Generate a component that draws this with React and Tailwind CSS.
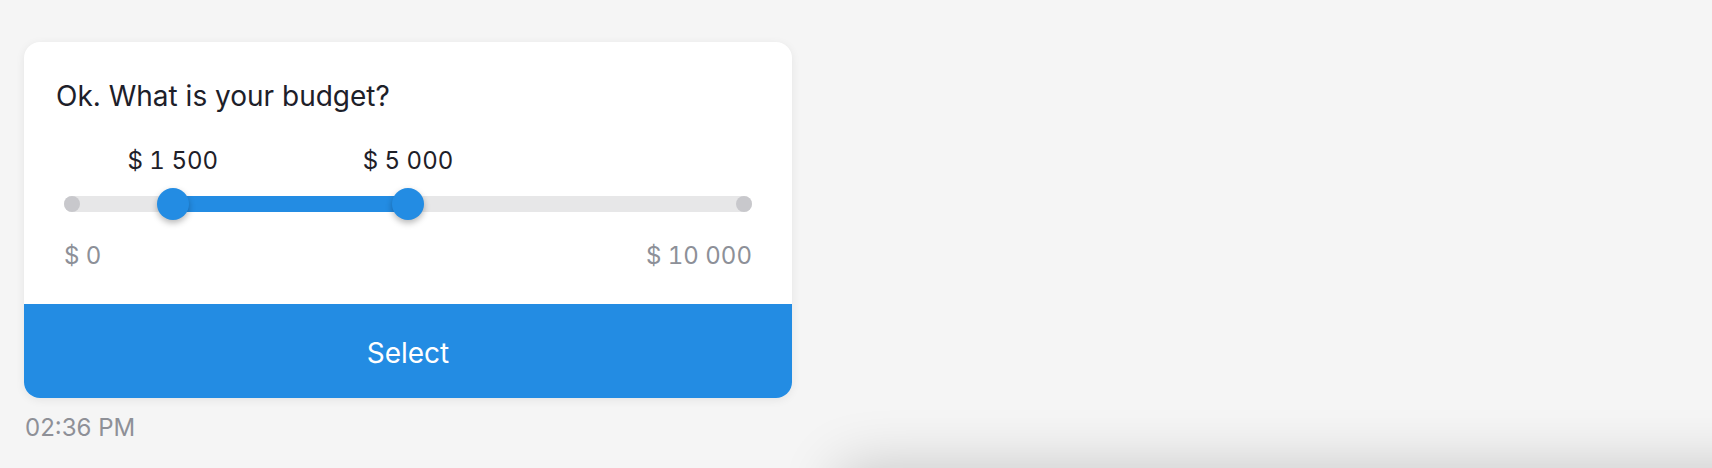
import React from 'react';

const MIN = 0;
const MAX = 10000;

const fmt = (n) =>
  '$\u00a0' + String(n).replace(/\B(?=(\d{3})+(?!\d))/g, '\u00a0');

const RangeSlider = ({ low, high }) => {
  const lowPct = ((low - MIN) / (MAX - MIN)) * 100;
  const highPct = ((high - MIN) / (MAX - MIN)) * 100;

  return (
    <div className="mt-[31px] flex flex-col tabular-nums">
      {/* Value labels */}
      <div className="relative mx-[16px] h-[32px]">
        {[
          { pct: lowPct, v: low },
          { pct: highPct, v: high },
        ].map((l, i) => (
          <span
            key={i}
            className="absolute top-0 -translate-x-1/2 whitespace-nowrap text-[24px] leading-[32px] text-[#1e2028]"
            style={{ left: `${l.pct}%` }}
          >
            {fmt(l.v)}
          </span>
        ))}
      </div>

      {/* Track */}
      <div className="mx-[8px] mt-[11px] flex h-[32px] items-center">
        <div className="relative flex h-[16px] flex-1 items-center justify-between rounded-full bg-[#e7e7e8]">
          <span className="h-[16px] w-[16px] rounded-full bg-[#c8c8cc]" />
          <span className="h-[16px] w-[16px] rounded-full bg-[#c8c8cc]" />
          <div className="absolute inset-y-0 left-[8px] right-[8px]">
            <div
              className="absolute inset-y-0 bg-[#238ce3]"
              style={{ left: `${lowPct}%`, width: `${highPct - lowPct}%` }}
            />
            {[lowPct, highPct].map((p, i) => (
              <div
                key={i}
                className="absolute top-1/2 h-[32px] w-[32px] -translate-x-1/2 -translate-y-1/2 rounded-full bg-[#238ce3] shadow-[0_3px_6px_rgba(0,0,0,0.28)]"
                style={{ left: `${p}%` }}
              />
            ))}
          </div>
        </div>
      </div>

      {/* Bounds */}
      <div className="mx-[8px] mt-[20px] flex justify-between text-[24px] leading-[32px] text-[#8d9098]">
        <span>{fmt(MIN)}</span>
        <span>{fmt(MAX)}</span>
      </div>
    </div>
  );
};

export default function App() {
  return (
    <div
      className="relative h-[468px] w-full overflow-hidden bg-[#f5f5f5]"
      style={{ fontFamily: 'Inter, "Liberation Sans", sans-serif' }}
    >
      <div className="flex flex-col items-start pl-[24px] pt-[42px]">
        <div className="flex w-[768px] flex-col overflow-hidden rounded-[16px] bg-white shadow-[0_2px_10px_rgba(0,0,0,0.07)]">
          <div className="flex flex-col px-[32px] pb-[32px] pt-[36px]">
            <p className="text-[28px] leading-[36px] text-[#1d2029]">
              Ok. What is your budget?
            </p>
            <RangeSlider low={1500} high={5000} />
          </div>
          <button className="flex h-[94px] w-full items-center justify-center bg-[#238ce3] pt-[4px] text-[28px] text-white">
            Select
          </button>
        </div>
        <div className="mt-[14px] pl-[1px] text-[24px] leading-[32px] text-[#8e9097]">
          02:36 PM
        </div>
      </div>

      {/* composer shadow peeking from below */}
      <div className="absolute left-[840px] right-[-100px] top-[468px] h-[100px] shadow-[0_0_60px_rgba(0,0,0,0.2)]" />
    </div>
  );
}
